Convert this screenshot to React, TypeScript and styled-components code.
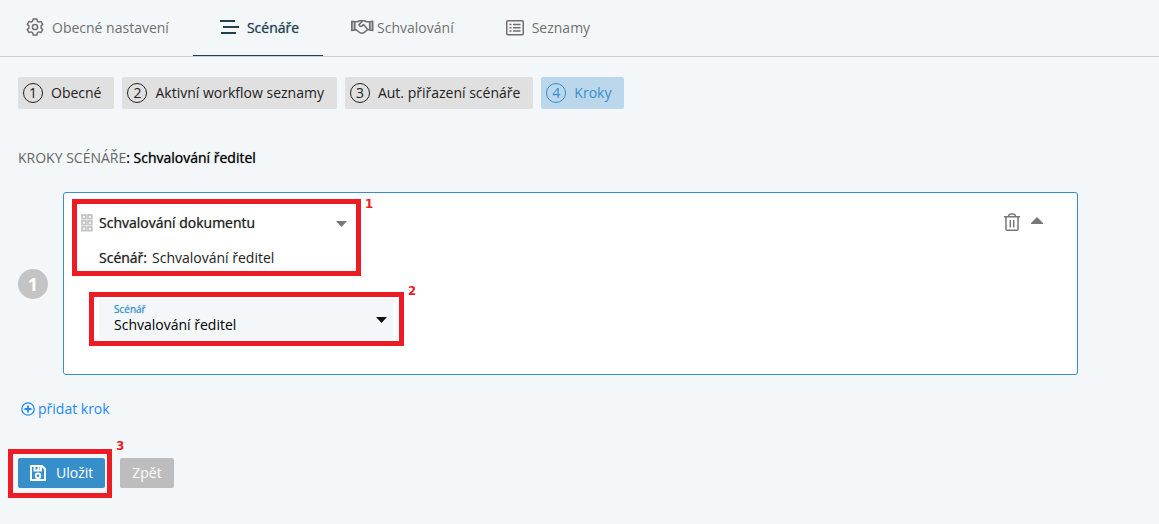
import React from "react";
import styled, { createGlobalStyle, css } from "styled-components";

const GlobalStyle = createGlobalStyle`
  *, *::before, *::after { box-sizing: border-box; }
  body {
    margin: 0;
    background: #f3f7fa;
    color: #222;
    font-family: "Open Sans", "Noto Sans", sans-serif;
    font-size: 14px;
    line-height: 20px;
  }
  button, select { font: inherit; color: inherit; margin: 0; border: 0; padding: 0; }
  button { cursor: pointer; }
  svg { display: block; flex: none; }
`;

const emphasis = css`
  text-shadow: 0 0 1px color-mix(in srgb, currentColor 65%, transparent);
`;

const Tabs = styled.nav`
  display: flex;
  height: 57px;
  border-bottom: 1px solid #c9cfd5;
`;

const Tab = styled.a<{ $active?: boolean }>`
  display: flex;
  align-items: center;
  height: 56px;
  padding: 0 24px;
  border-bottom: 1px solid ${(p) => (p.$active ? "#24404f" : "transparent")};
  color: ${(p) => (p.$active ? "#24404f" : "#707070")};
  text-decoration: none;
  white-space: nowrap;
  ${(p) => p.$active && emphasis}
`;

const TabIcon = styled.span<{ $width?: number }>`
  width: ${(p) => p.$width ?? 30}px;
  padding-left: ${(p) => (p.$width ? 2 : 3)}px;
`;

const Main = styled.main`
  padding: 20px 81px 26px 18px;
`;

const Steps = styled.div`
  display: flex;
  flex-wrap: wrap;
  gap: 8px;
`;

const Step = styled.button<{ $active?: boolean }>`
  display: flex;
  align-items: center;
  gap: 8px;
  height: 32px;
  padding: 0 13px 0 5px;
  border-radius: 2px;
  background: ${(p) => (p.$active ? "#bad7ec" : "#e0e0e0")};
  color: ${(p) => (p.$active ? "#378fca" : "#222")};
`;

const StepNumber = styled.span`
  width: 20px;
  height: 20px;
  border: 1px solid currentColor;
  border-radius: 50%;
  line-height: 18px;
  text-align: center;
`;

const Heading = styled.h1`
  margin: 39px 0 24px;
  font-size: 14px;
  line-height: 20px;
  font-weight: 400;
  color: #000;
  ${emphasis}
`;

const HeadingLabel = styled.span`
  color: #666;
  text-shadow: none;
  text-transform: uppercase;
`;

const StepRow = styled.section`
  display: flex;
  align-items: center;
  gap: 15px;
`;

const Order = styled.span`
  flex: none;
  width: 30px;
  height: 30px;
  border-radius: 50%;
  background: #c4c4c4;
  color: #fff;
  font-size: 18px;
  line-height: 30px;
  font-weight: 700;
  text-align: center;
`;

const Card = styled.div`
  flex: 1;
  display: flex;
  justify-content: space-between;
  align-items: flex-start;
  padding: 11px 34px 33px 13px;
  border: 1px solid #378fca;
  border-radius: 3px;
  background: #fff;
`;

const Marked = styled.div`
  position: relative;
`;

const Mark = styled.span`
  position: absolute;
  inset: -5px;
  border: 5px solid #ed1c24;
  pointer-events: none;
`;

const MarkNumber = styled.span<{ $drop?: number }>`
  position: absolute;
  left: 100%;
  bottom: 100%;
  margin: 0 0 ${(p) => -(p.$drop ?? 0)}px 9px;
  color: #ed1c24;
  font-family: "DejaVu Sans Condensed", "DejaVu Sans", sans-serif;
  font-size: 13px;
  line-height: 16px;
  font-weight: 700;
`;

const Summary = styled(Marked)`
  width: 279px;
  padding: 8px 9px 3px 4px;
`;

const TitleRow = styled.div`
  display: flex;
  align-items: center;
  gap: 6px;
`;

const SelectBox = styled.div`
  position: relative;
  flex: 1;
  display: flex;
`;

const Select = styled.select`
  appearance: none;
  width: 100%;
  background: transparent;
  outline: none;
`;

const TitleSelect = styled(Select)`
  height: 22px;
  ${emphasis}
`;

const Caret = styled.svg`
  position: absolute;
  right: 0;
  top: 50%;
  margin-top: -2px;
  pointer-events: none;
`;

const Detail = styled.p`
  margin: 14px 0 0 18px;
`;

const DetailName = styled.span`
  margin-right: 5px;
  ${emphasis}
`;

const ScenarioField = styled(Marked)`
  width: 305px;
  margin: 26px 0 0 17px;
  padding: 2px 6px 2px 5px;
`;

const FieldBox = styled(SelectBox)`
  height: 40px;
  background: #f3f7fa;
`;

const FieldLabel = styled.label`
  position: absolute;
  left: 15px;
  top: 4px;
  color: #378fca;
  font-size: 10px;
  line-height: 12px;
  ${emphasis}
`;

const FieldSelect = styled(Select)`
  padding: 14px 24px 2px 15px;
  color: #000;
`;

const FieldCaret = styled(Caret)`
  right: 6px;
`;

const CardActions = styled.div`
  display: flex;
  align-items: center;
  gap: 11px;
  padding-top: 9px;
  color: #777;
`;

const IconButton = styled.button`
  display: flex;
  background: none;
`;

const AddStep = styled.a`
  display: inline-flex;
  align-items: center;
  gap: 3px;
  margin: 24px 0 0 3px;
  color: #1e88ff;
  text-decoration: none;
`;

const Footer = styled.footer`
  display: flex;
  align-items: flex-start;
  gap: 13px;
  margin: 33px 0 0 -5px;
`;

const SaveArea = styled(Marked)`
  margin-top: -4px;
  padding: 4px 2px 5px 5px;
`;

const Button = styled.button<{ $primary?: boolean }>`
  display: flex;
  align-items: center;
  gap: 10px;
  height: 30px;
  padding: 0 12px;
  border-radius: 2px;
  background: ${(p) => (p.$primary ? "#378fca" : "#bdbdbd")};
  color: #fff;
`;

const Actions = styled.div`
  padding-top: 4px;
`;

const GearIcon = () => (
  <svg width="18" height="20" viewBox="0 0 18 20" fill="none" stroke="currentColor" strokeWidth="1.5" strokeLinejoin="round">
    <path d="M7.2 1h3.6l.5 2.2 1.5.9 2.1-.7 1.8 3-1.6 1.5v2.2l1.6 1.5-1.8 3-2.1-.7-1.5.9-.5 2.2H7.2l-.5-2.2-1.5-.9-2.1.7-1.8-3 1.6-1.5V7.9L1.3 6.4l1.8-3 2.1.7 1.5-.9z" />
    <circle cx="9" cy="9" r="2.6" />
  </svg>
);

const LinesIcon = () => (
  <svg width="19" height="18" viewBox="0 0 19 18" fill="none" stroke="currentColor" strokeWidth="1.8">
    <path d="M0 2h15M3 8h16M1 14h15" />
  </svg>
);

const HandshakeIcon = () => (
  <svg width="24" height="17" viewBox="0 0 24 17" fill="none" stroke="currentColor" strokeWidth="1.6" strokeLinejoin="round">
    <path d="M5 2.8h2.5L9.5 1.8h5l2 1h3M5 10.8h1.3l4 3.2h3.2l3.8-3.2h2.2M12.5 2L9 5.6c0 2 2.2 2.2 3.4 1l1.1-1 4 4.6" />
    <path d="M1.8 2.2l3 .6v8.2l-3 .5zM22.7 2.2l-3 .6v8.2l3 .5z" fill="currentColor" fillOpacity="0.4" />
  </svg>
);

const ListIcon = () => (
  <svg width="19" height="18" viewBox="0 0 19 18" fill="none" stroke="currentColor" strokeWidth="1.5">
    <rect x="1.75" y="1.75" width="16.5" height="14" rx="1" />
    <path d="M4.5 5.5h2M8 5.5h7.5M4.5 8.8h2M8 8.8h7.5M4.5 12h2M8 12h7.5" />
  </svg>
);

const GripIcon = () => (
  <svg width="12" height="18" viewBox="0 0 12 18" fill="none" stroke="#c4c4c4" strokeWidth="1.8">
    {[1, 7, 13].map((y) =>
      [1, 7].map((x) => <rect key={`${x}-${y}`} x={x} y={y} width="3.8" height="3.6" />)
    )}
  </svg>
);

const TrashIcon = () => (
  <svg width="16" height="18" viewBox="0 0 16 18" fill="none" stroke="currentColor" strokeWidth="1.5">
    <path d="M0 3.7h16M4.3 3.5Q5 1 6.5 1h3q1.500 0 2.200 2.500M2 4v12.200q0 1 1 1h10q1 0 1-1V4M6.300 7v7.500M9.700 7v7.500" />
  </svg>
);

const PlusIcon = () => (
  <svg width="14" height="14" viewBox="0 0 14 14" fill="none" stroke="currentColor" strokeWidth="1.3">
    <circle cx="7" cy="7" r="6.2" />
    <path d="M7 3.5v7M3.5 7h7" strokeWidth="1.8" />
  </svg>
);

const SaveIcon = () => (
  <svg width="16" height="16" viewBox="0 0 16 16" fill="none" stroke="currentColor" strokeWidth="1.9">
    <path d="M1 1h11l3 3v11H1z" />
    <path d="M4.5 1v4.5h6.500V1M8.500 1.500v3" />
    <circle cx="8" cy="10.8" r="2.3" />
  </svg>
);

const CollapseIcon = () => (
  <svg width="12" height="10" viewBox="0 0 12 10" fill="currentColor">
    <path d="M6 0l6 6v1H0V6z" />
  </svg>
);

const steps = ["Obecné", "Aktivní workflow seznamy", "Aut. přiřazení scénáře", "Kroky"];

export default function App() {
  return (
    <>
      <GlobalStyle />
      <Tabs>
        <Tab href="#obecne"><TabIcon $width={28}><GearIcon /></TabIcon>Obecné nastavení</Tab>
        <Tab href="#scenare" $active><TabIcon><LinesIcon /></TabIcon>Scénáře</Tab>
        <Tab href="#schvalovani"><TabIcon><HandshakeIcon /></TabIcon>Schvalování</Tab>
        <Tab href="#seznamy"><TabIcon><ListIcon /></TabIcon>Seznamy</Tab>
      </Tabs>
      <Main>
        <Steps>
          {steps.map((name, i) => (
            <Step key={name} type="button" $active={i === 3}>
              <StepNumber>{i + 1}</StepNumber>
              {name}
            </Step>
          ))}
        </Steps>
        <Heading><HeadingLabel>Kroky scénáře</HeadingLabel>: Schvalování ředitel</Heading>
        <StepRow>
          <Order>1</Order>
          <Card>
            <div>
              <Summary>
                <TitleRow>
                  <GripIcon />
                  <SelectBox>
                    <TitleSelect aria-label="Typ kroku"><option>Schvalování dokumentu</option></TitleSelect>
                    <Caret width="11" height="6" viewBox="0 0 11 6" fill="#777"><path d="M0 0h11L5.5 6z" /></Caret>
                  </SelectBox>
                </TitleRow>
                <Detail><DetailName>Scénář:</DetailName>Schvalování ředitel</Detail>
                <Mark />
                <MarkNumber $drop={8}>1</MarkNumber>
              </Summary>
              <ScenarioField>
                <FieldBox>
                  <FieldLabel htmlFor="scenario">Scénář</FieldLabel>
                  <FieldSelect id="scenario"><option>Schvalování ředitel</option></FieldSelect>
                  <FieldCaret width="11" height="6" viewBox="0 0 11 6" fill="#111"><path d="M0 0h11L5.5 6z" /></FieldCaret>
                </FieldBox>
                <Mark />
                <MarkNumber $drop={2}>2</MarkNumber>
              </ScenarioField>
            </div>
            <CardActions>
              <IconButton type="button" aria-label="Smazat krok"><TrashIcon /></IconButton>
              <IconButton type="button" aria-label="Sbalit krok"><CollapseIcon /></IconButton>
            </CardActions>
          </Card>
        </StepRow>
        <AddStep href="#pridat"><PlusIcon />přidat krok</AddStep>
        <Footer>
          <Actions>
            <SaveArea>
              <Button type="submit" $primary><SaveIcon />Uložit</Button>
              <Mark />
              <MarkNumber>3</MarkNumber>
            </SaveArea>
          </Actions>
          <Actions>
            <Button type="button">Zpět</Button>
          </Actions>
        </Footer>
      </Main>
    </>
  );
}
